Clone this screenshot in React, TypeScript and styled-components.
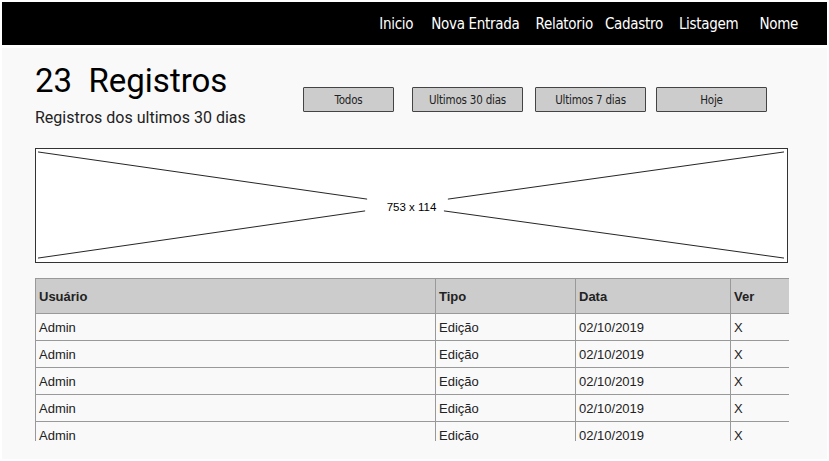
import React from "react";
import styled, { createGlobalStyle } from "styled-components";

const Global = createGlobalStyle`
  html, body { margin: 0; padding: 0; background: #ffffff; }
  body { font-family: "Liberation Sans", Arial, sans-serif; }
`;

const Frame = styled.div`
  width: 829px;
  height: 461px;
  padding: 2px;
  box-sizing: border-box;
  display: flex;
  flex-direction: column;
  gap: 3px;
  overflow: hidden;
`;

const TopBar = styled.nav`
  height: 43px;
  flex-shrink: 0;
  background: #000;
  display: flex;
  align-items: center;
  justify-content: flex-end;
  padding-right: 29px;
`;

const NavItem = styled.a<{ $gap: number }>`
  color: #fff;
  font-family: "DejaVu Sans Condensed", "DejaVu Sans", sans-serif;
  font-size: 15px;
  letter-spacing: -0.3px;
  margin-left: ${(p) => p.$gap}px;
  text-decoration: none;
`;

const Main = styled.main`
  flex: 1;
  background: #f9f9f9;
  padding: 15px 38px 0 33px;
  display: flex;
  flex-direction: column;
  overflow: hidden;
`;

const HeadRow = styled.div`
  display: flex;
  align-items: flex-start;
`;

const TitleBlock = styled.div`
  display: flex;
  flex-direction: column;
  width: 268px;
`;

const Title = styled.h1`
  margin: 0;
  font-family: Roboto, sans-serif;
  font-weight: 400;
  font-size: 33px;
  line-height: 36px;
  color: #000;
  white-space: pre;
`;

const Subtitle = styled.p`
  margin: 9px 0 0 0;
  font-family: Roboto, sans-serif;
  font-size: 16px;
  line-height: 20px;
  color: #222;
`;

const Filters = styled.div`
  display: flex;
  margin-top: 24px;
`;

const FilterButton = styled.button<{ $w: number; $gap: number }>`
  width: ${(p) => p.$w}px;
  height: 25px;
  margin-left: ${(p) => p.$gap}px;
  background: #cccccc;
  border: 1px solid #444;
  border-radius: 1px;
  font-family: "DejaVu Sans Condensed", "DejaVu Sans", sans-serif;
  font-size: 11.5px;
  color: #222;
  padding: 0;
  letter-spacing: -0.2px;
`;

const Placeholder = styled.div`
  position: relative;
  flex-shrink: 0;
  margin-top: 20px;
  width: 753px;
  height: 115px;
  box-sizing: border-box;
  border: 1px solid #333;
  background: #fff;
  display: flex;
  align-items: center;
  justify-content: center;
`;

const Lines = styled.svg`
  position: absolute;
  inset: 0;
  width: 100%;
  height: 100%;
`;

const PlaceholderLabel = styled.span`
  position: relative;
  top: 1px;
  font-family: "Liberation Sans", Arial, sans-serif;
  font-size: 11.5px;
  color: #000;
`;

const TableWrap = styled.div`
  flex-shrink: 0;
  margin-top: 15px;
  width: 754px;
  height: 163px;
  overflow: hidden;
`;

const Table = styled.table`
  width: 754px;
  border-collapse: collapse;
  table-layout: fixed;
  font-family: "Liberation Sans", Arial, sans-serif;
  font-size: 13px;
  color: #222;
`;

const Th = styled.th<{ $w: number }>`
  width: ${(p) => p.$w}px;
  height: 35px;
  box-sizing: border-box;
  background: #cccccc;
  border: 1px solid #999;
  text-align: left;
  font-weight: 600;
  padding: 0 3px;
  color: #222;
`;

const Td = styled.td`
  height: 27px;
  box-sizing: border-box;
  border: 1px solid #999;
  padding: 0 3px;
  background: #f9f9f9;
`;

const navItems: [string, number][] = [
  ["Inicio", 0],
  ["Nova Entrada", 18],
  ["Relatorio", 16],
  ["Cadastro", 12],
  ["Listagem", 16],
  ["Nome", 21],
];

const filters: [string, number, number][] = [
  ["Todos", 91, 0],
  ["Ultimos 30 dias", 111, 18],
  ["Ultimos 7 dias", 111, 12],
  ["Hoje", 111, 10],
];

const rows = Array.from({ length: 6 }, () => ["Admin", "Edição", "02/10/2019", "X"]);

export default function App() {
  return (
    <>
      <Global />
      <Frame>
        <TopBar>
          {navItems.map(([label, gap]) => (
            <NavItem key={label} $gap={gap}>
              {label}
            </NavItem>
          ))}
        </TopBar>
        <Main>
          <HeadRow>
            <TitleBlock>
              <Title>{"23  Registros"}</Title>
              <Subtitle>Registros dos ultimos 30 dias</Subtitle>
            </TitleBlock>
            <Filters>
              {filters.map(([label, w, gap]) => (
                <FilterButton key={label} $w={w} $gap={gap}>
                  {label}
                </FilterButton>
              ))}
            </Filters>
          </HeadRow>
          <Placeholder>
            <Lines viewBox="0 0 753 115" preserveAspectRatio="none">
              <g stroke="#222" strokeWidth="1" fill="none">
                <line x1="2" y1="3" x2="332" y2="51" />
                <line x1="2" y1="111" x2="330" y2="63" />
                <line x1="413" y1="51" x2="750" y2="3" />
                <line x1="409" y1="63" x2="750" y2="111" />
              </g>
            </Lines>
            <PlaceholderLabel>753 x 114</PlaceholderLabel>
          </Placeholder>
          <TableWrap>
            <Table>
              <thead>
                <tr>
                  <Th $w={400}>Usuário</Th>
                  <Th $w={140}>Tipo</Th>
                  <Th $w={155}>Data</Th>
                  <Th $w={59}>Ver</Th>
                </tr>
              </thead>
              <tbody>
                {rows.map((r, i) => (
                  <tr key={i}>
                    {r.map((c, j) => (
                      <Td key={j}>{c}</Td>
                    ))}
                  </tr>
                ))}
              </tbody>
            </Table>
          </TableWrap>
        </Main>
      </Frame>
    </>
  );
}
